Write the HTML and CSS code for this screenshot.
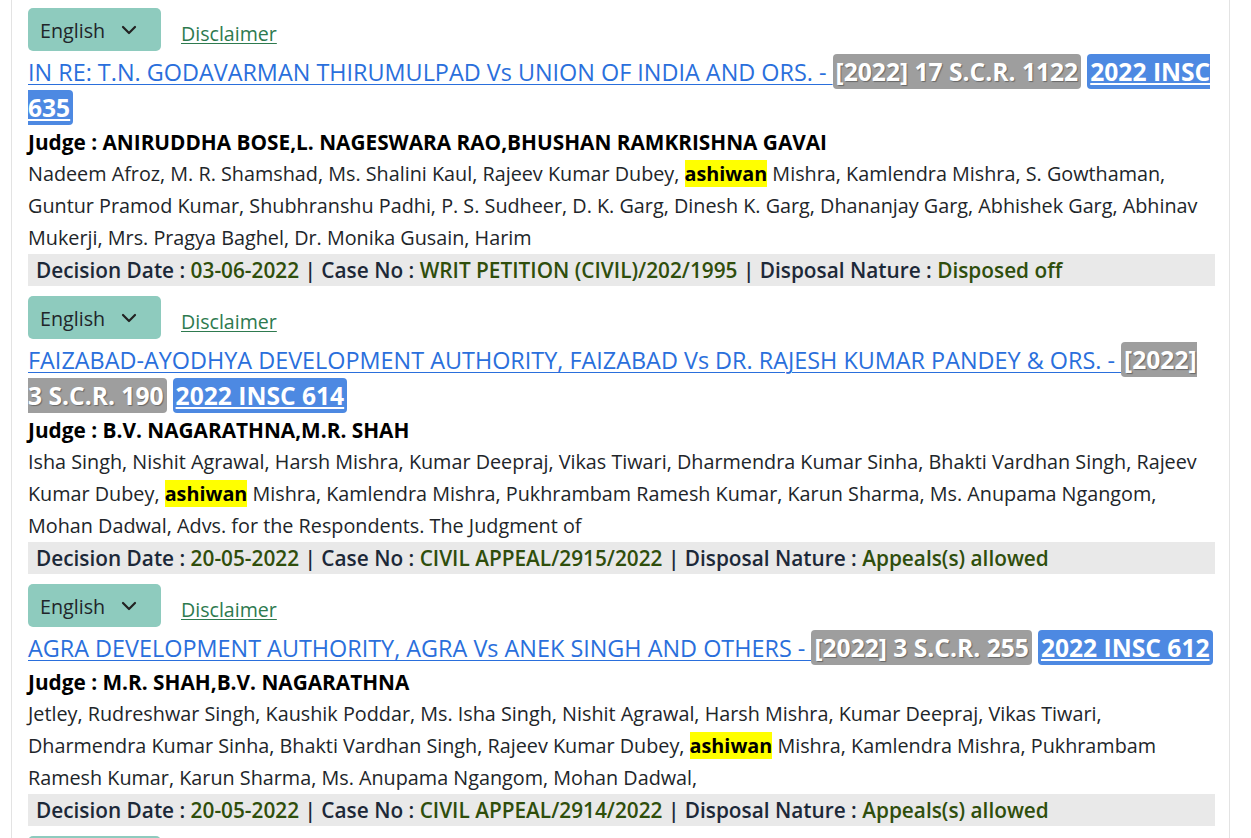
FILE: index.html
```html
<!DOCTYPE html>
<html lang="en">
<head>
<meta charset="utf-8">
<title>Judgments</title>
<link rel="stylesheet" href="styles.css">
</head>
<body>
<div class="page">
  <div class="result">
    <div class="tools">
      <button class="lang" type="button">English <svg class="chev" width="16" height="10" viewBox="0 0 16 10"><path d="M2 2 L8 8 L14 2" fill="none" stroke="#222" stroke-width="2.2" stroke-linecap="round" stroke-linejoin="round"/></svg></button>
      <a class="disclaimer" href="#">Disclaimer</a>
    </div>
    <div class="title"><a class="case" href="#">IN RE: T.N. GODAVARMAN THIRUMULPAD Vs UNION OF INDIA AND ORS. - </a> <span class="badge scr">[2022] 17 S.C.R. 1122</span> <a class="badge insc" href="#">2022 INSC 635</a></div>
    <div class="judge">Judge : ANIRUDDHA BOSE,L. NAGESWARA RAO,BHUSHAN RAMKRISHNA GAVAI</div>
    <p class="snippet">Nadeem Afroz, M. R. Shamshad, Ms. Shalini Kaul, Rajeev Kumar Dubey, <mark>ashiwan</mark> Mishra, Kamlendra Mishra, S. Gowthaman, Guntur Pramod Kumar, Shubhranshu Padhi, P. S. Sudheer, D. K. Garg, Dinesh K. Garg, Dhananjay Garg, Abhishek Garg, Abhinav Mukerji, Mrs. Pragya Baghel, Dr. Monika Gusain, Harim</p>
    <div class="meta">Decision Date : <span class="val">03-06-2022</span> | Case No : <span class="val">WRIT PETITION (CIVIL)/202/1995</span> | Disposal Nature : <span class="val">Disposed off</span></div>
  </div>

  <div class="result">
    <div class="tools">
      <button class="lang" type="button">English <svg class="chev" width="16" height="10" viewBox="0 0 16 10"><path d="M2 2 L8 8 L14 2" fill="none" stroke="#222" stroke-width="2.2" stroke-linecap="round" stroke-linejoin="round"/></svg></button>
      <a class="disclaimer" href="#">Disclaimer</a>
    </div>
    <div class="title"><a class="case" href="#">FAIZABAD-AYODHYA DEVELOPMENT AUTHORITY, FAIZABAD Vs DR. RAJESH KUMAR PANDEY &amp; ORS. - </a> <span class="badge scr">[2022] 3 S.C.R. 190</span> <a class="badge insc" href="#">2022 INSC 614</a></div>
    <div class="judge">Judge : B.V. NAGARATHNA,M.R. SHAH</div>
    <p class="snippet">Isha Singh, Nishit Agrawal, Harsh Mishra, Kumar Deepraj, Vikas Tiwari, Dharmendra Kumar Sinha, Bhakti Vardhan Singh, Rajeev Kumar Dubey, <mark>ashiwan</mark> Mishra, Kamlendra Mishra, Pukhrambam Ramesh Kumar, Karun Sharma, Ms. Anupama Ngangom, Mohan Dadwal, Advs. for the Respondents. The Judgment of</p>
    <div class="meta">Decision Date : <span class="val">20-05-2022</span> | Case No : <span class="val">CIVIL APPEAL/2915/2022</span> | Disposal Nature : <span class="val">Appeals(s) allowed</span></div>
  </div>

  <div class="result">
    <div class="tools">
      <button class="lang" type="button">English <svg class="chev" width="16" height="10" viewBox="0 0 16 10"><path d="M2 2 L8 8 L14 2" fill="none" stroke="#222" stroke-width="2.2" stroke-linecap="round" stroke-linejoin="round"/></svg></button>
      <a class="disclaimer" href="#">Disclaimer</a>
    </div>
    <div class="title"><a class="case" href="#">AGRA DEVELOPMENT AUTHORITY, AGRA Vs ANEK SINGH AND OTHERS - </a> <span class="badge scr">[2022] 3 S.C.R. 255</span> <a class="badge insc" href="#">2022 INSC 612</a></div>
    <div class="judge">Judge : M.R. SHAH,B.V. NAGARATHNA</div>
    <p class="snippet">Jetley, Rudreshwar Singh, Kaushik Poddar, Ms. Isha Singh, Nishit Agrawal, Harsh Mishra, Kumar Deepraj, Vikas Tiwari, Dharmendra Kumar Sinha, Bhakti Vardhan Singh, Rajeev Kumar Dubey, <mark>ashiwan</mark> Mishra, Kamlendra Mishra, Pukhrambam Ramesh Kumar, Karun Sharma, Ms. Anupama Ngangom, Mohan Dadwal,</p>
    <div class="meta">Decision Date : <span class="val">20-05-2022</span> | Case No : <span class="val">CIVIL APPEAL/2914/2022</span> | Disposal Nature : <span class="val">Appeals(s) allowed</span></div>
  </div>

  <div class="result">
    <div class="tools">
      <button class="lang" type="button">English <svg class="chev" width="16" height="10" viewBox="0 0 16 10"><path d="M2 2 L8 8 L14 2" fill="none" stroke="#222" stroke-width="2.2" stroke-linecap="round" stroke-linejoin="round"/></svg></button>
      <a class="disclaimer" href="#">Disclaimer</a>
    </div>
  </div>
</div>
</body>
</html>
```
FILE: styles.css
```css
* { box-sizing: border-box; }
html, body { margin: 0; padding: 0; background: #fff; }
body {
  font-family: "Open Sans", "Noto Sans", "DejaVu Sans", sans-serif;
  color: #212529;
  height: 838px;
  overflow: hidden;
}
.page {
  margin-left: 11px;
  width: 1219px;
  height: 838px;
  overflow: hidden;
  border-left: 1px solid #e3e3e3;
  border-right: 1px solid #e3e3e3;
  padding: 8px 14px 0 16px;
}
.result { margin-bottom: 10px; }
.tools {
  display: flex;
  align-items: flex-start;
  height: 46px;
  gap: 20px;
}
.lang {
  display: flex;
  align-items: center;
  gap: 16px;
  width: 133px;
  height: 43px;
  padding: 3px 0 0 12px;
  border: 0;
  border-radius: 5px;
  background: #8ecbbe;
  color: #212529;
  font-family: inherit;
  font-size: 19.7px;
  line-height: 1;
}
.chev { display: block; margin-top: -2px; }
.disclaimer {
  margin-top: 12px;
  font-size: 19.6px;
  line-height: 27px;
  color: #2e7a4f;
  text-decoration: underline;
  text-underline-offset: 2px;
}
.title {
  font-size: 23.4px;
  line-height: 36px;
}
.case {
  color: #2a6fdc;
  text-decoration: underline;
  text-decoration-thickness: 1px;
  text-underline-offset: 3px;
}
.badge {
  font-weight: 700;
  font-size: 24.6px;
  color: #fff;
  padding: 1px 3px;
  border-radius: 4px;
  -webkit-box-decoration-break: slice;
  box-decoration-break: slice;
}
.scr {
  background: #9e9e9e;
  text-shadow: 1px 1px 1px rgba(0,0,0,0.35);
}
.insc {
  background: #4d89e2;
  text-decoration: underline;
  text-decoration-thickness: 2px;
  text-underline-offset: 2px;
}
.judge {
  font-size: 20.8px;
  line-height: 32px;
  font-weight: 700;
  color: #000;
}
.snippet {
  margin: 0;
  font-size: 19.8px;
  line-height: 32px;
  color: #212529;
}
mark {
  background: #ffff00;
  color: #000;
  font-weight: 700;
}
.meta {
  background: #e9e9e9;
  padding: 0 8px;
  font-size: 20.8px;
  line-height: 32px;
  font-weight: 600;
  color: #1c2838;
}
.val { color: #2f4e0c; }
```
